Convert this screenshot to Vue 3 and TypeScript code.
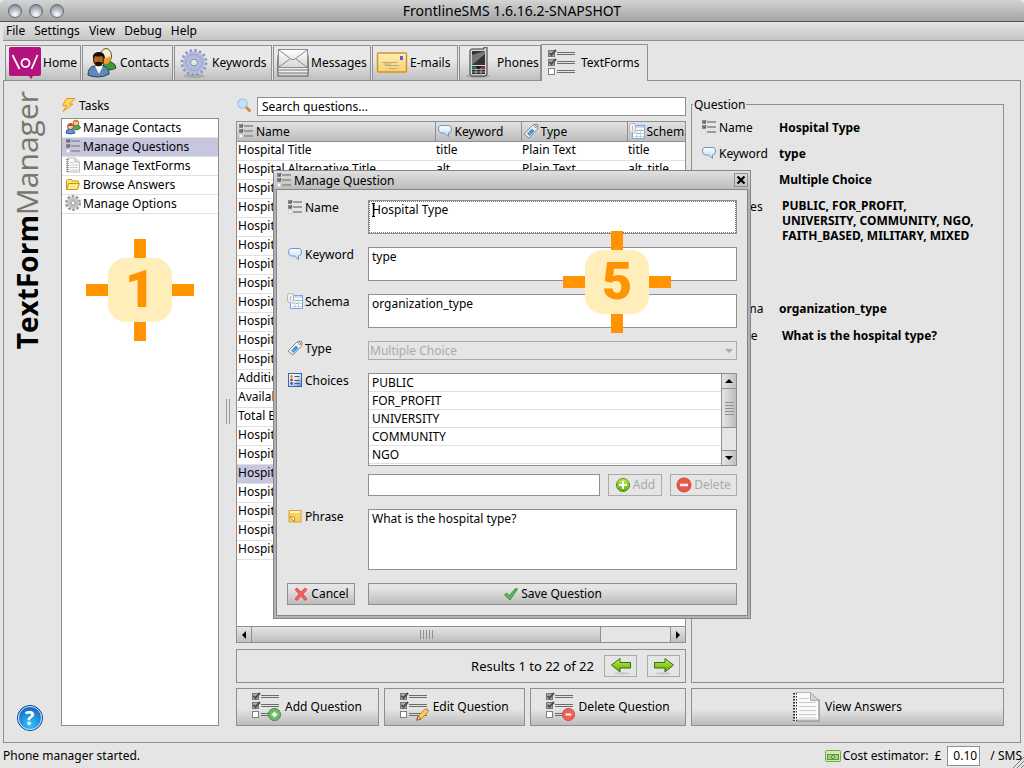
<script setup lang="ts">
import { ref } from 'vue'

interface Tab {
  label: string
  icon: string
  width: string
}

const menus = ['File', 'Settings', 'View', 'Debug', 'Help']

const tabs: Tab[] = [
  { label: 'Home', icon: 'home', width: 'w-home' },
  { label: 'Contacts', icon: 'contacts', width: 'w-contacts' },
  { label: 'Keywords', icon: 'gear-blue', width: 'w-keywords' },
  { label: 'Messages', icon: 'messages', width: 'w-messages' },
  { label: 'E-mails', icon: 'email', width: 'w-emails' },
  { label: 'Phones', icon: 'phone', width: 'w-phones' },
  { label: 'TextForms', icon: 'checklist', width: 'w-forms' },
]
const activeTab = ref('TextForms')

const tasks = [
  { label: 'Manage Contacts', icon: 'people' },
  { label: 'Manage Questions', icon: 'list' },
  { label: 'Manage TextForms', icon: 'notepad' },
  { label: 'Browse Answers', icon: 'folder' },
  { label: 'Manage Options', icon: 'gear' },
]
const activeTask = ref('Manage Questions')

const columns = [
  { label: 'Name', icon: 'list' },
  { label: 'Keyword', icon: 'bubble' },
  { label: 'Type', icon: 'tag' },
  { label: 'Schema', icon: 'schema' },
]

const names = [
  'Hospital Title',
  'Hospital Alternative Title',
  ...Array<string>(10).fill('Hospital'),
  'Additional',
  'Available',
  'Total Beds',
  ...Array<string>(7).fill('Hospital'),
]
const rows = names.map((name, i) => ({
  name,
  keyword: ['title', 'alt'][i] ?? '',
  type: i < 2 ? 'Plain Text' : '',
  schema: ['title', 'alt_title'][i] ?? '',
}))
const selectedRow = ref(17)

const details = [
  { label: 'Name', icon: 'list', value: 'Hospital Type', kind: '' },
  { label: 'Keyword', icon: 'bubble', value: 'type', kind: '' },
  { label: 'Type', icon: 'tag', value: 'Multiple Choice', kind: '' },
  {
    label: 'Choices',
    icon: 'choices',
    value: 'PUBLIC, FOR_PROFIT,\nUNIVERSITY, COMMUNITY, NGO,\nFAITH_BASED, MILITARY, MIXED',
    kind: 'tall',
  },
  { label: 'Schema', icon: 'schema', value: 'organization_type', kind: '' },
  { label: 'Phrase', icon: 'note', value: 'What is the hospital type?', kind: 'text' },
]

const choices = ['PUBLIC', 'FOR_PROFIT', 'UNIVERSITY', 'COMMUNITY', 'NGO']

const search = ref('Search questions...')
const questionName = ref('Hospital Type')
const keyword = ref('type')
const schema = ref('organization_type')
const newChoice = ref('')
const phrase = ref('What is the hospital type?')
const cost = ref('0.10')
</script>

<template>
  <div class="window">
    <svg class="defs" aria-hidden="true">
      <defs>
        <linearGradient id="gBlue" x1="0" y1="0" x2="0" y2="1">
          <stop offset="0" stop-color="#ffffff" /><stop offset="1" stop-color="#b9d8f5" />
        </linearGradient>
        <linearGradient id="gGold" x1="0" y1="0" x2="0" y2="1">
          <stop offset="0" stop-color="#fff0b8" /><stop offset="1" stop-color="#f7cf6b" />
        </linearGradient>
        <linearGradient id="gGreen" x1="0" y1="0" x2="0" y2="1">
          <stop offset="0" stop-color="#c8ef4e" /><stop offset="1" stop-color="#5fa800" />
        </linearGradient>
        <linearGradient id="gPaper" x1="0" y1="0" x2="0" y2="1">
          <stop offset="0" stop-color="#ffffff" /><stop offset="1" stop-color="#d6d6d6" />
        </linearGradient>
        <linearGradient id="gChoice" x1="0" y1="0" x2="1" y2="1">
          <stop offset="0" stop-color="#ffffff" /><stop offset="0.5" stop-color="#dbe7fb" /><stop offset="1" stop-color="#5f88cf" />
        </linearGradient>
        <radialGradient id="gHelp" cx="0.5" cy="0.75" r="0.8">
          <stop offset="0" stop-color="#3cc4ff" /><stop offset="1" stop-color="#0a55b8" />
        </radialGradient>
        <symbol id="i-home" viewBox="0 0 32 32">
          <path d="M2 0h28q2 0 2 2v25q0 2-2 2h-6l-2 3-2-3H2q-2 0-2-2V2q0-2 2-2z" fill="#b5127f" />
          <path d="M3.500 8l7 14M28.500 8l-6 14" fill="none" stroke="#fff" stroke-width="1.800" />
          <circle cx="16.500" cy="16" r="4" fill="none" stroke="#fff" stroke-width="1.800" />
        </symbol>
        <symbol id="i-contacts" viewBox="0 0 32 32">
          <path d="M17 22l1-7q4-2 7 0 5 2 5 6-3 2-8 2z" fill="#3a9a35" stroke="#15521a" />
          <ellipse cx="20" cy="9" rx="5.500" ry="7.500" fill="#f6efcd" stroke="#5b5334" />
          <path d="M16.500 11q4 1 7-2l1 4q-2 5-6 4z" fill="#f59a2c" />
          <path d="M2 28q0-8 6-9h9q6 1 6 8-5 3-11 3T2 28z" fill="#5d88ba" stroke="#1d3f6b" />
          <path d="M9 19l4 8 4-8z" fill="#fff" />
          <ellipse cx="12.500" cy="12.500" rx="5" ry="6.500" fill="#b9651c" stroke="#321400" />
          <path d="M7 12q-1-7 6-7 6 0 6 7-2-2-3-3-4 1-7 0-1 1-2 3zM9 15.500q4-1.500 7 0l-1 3h-5z" fill="#170b04" />
        </symbol>
        <symbol id="i-gear-blue" viewBox="0 0 32 32">
          <ellipse cx="16" cy="29" rx="11" ry="2" fill="#aaa" />
          <circle cx="16" cy="15.500" r="11.500" fill="none" stroke="#8d97bf" stroke-width="4" stroke-dasharray="2.300 2.215" />
          <circle cx="16" cy="15.500" r="7.500" fill="none" stroke="#b3bbdd" stroke-width="7" />
          <circle cx="16" cy="15.500" r="8" fill="none" stroke="#98a2cb" stroke-width="1" />
          <circle cx="16" cy="15.500" r="3.500" fill="#e5e5e5" stroke="#7480aa" />
        </symbol>
        <symbol id="i-messages" viewBox="0 0 32 32">
          <rect x="1" y="14" width="30" height="15" fill="#ddd" stroke="#555" />
          <rect x="1" y="11" width="30" height="15" fill="#eee" stroke="#777" />
          <rect x="1" y="8" width="30" height="15" fill="#eee" stroke="#777" />
          <rect x="1.500" y="2.500" width="29" height="18" fill="url(#gPaper)" stroke="#8b8b8b" />
          <path d="M2 20l11-8M30 20l-11-8M2 3l12 9q2 1.500 4 0l12-9" fill="none" stroke="#888" />
        </symbol>
        <symbol id="i-email" viewBox="0 0 32 32">
          <rect x="1.500" y="6" width="29" height="19" rx="1" fill="url(#gGold)" stroke="#d39324" stroke-width="1.500" />
          <rect x="24" y="9" width="3" height="4" fill="#6857dd" />
          <path d="M6 15.500h15M9 18.500h14M13 21.500h8M8 17h7" stroke="#b9a987" stroke-width="1" />
        </symbol>
        <symbol id="i-phone" viewBox="0 0 32 32">
          <ellipse cx="15" cy="29" rx="12" ry="2" fill="#aaa" />
          <path d="M7 4q0-2 2-2h12V0h3v27q0 2-2 2H9q-2 0-2-2z" fill="#d6d6d6" stroke="#333" />
          <rect x="9" y="4" width="13" height="14" fill="#333" />
          <path d="M9 18V8l13-4v3z" fill="#777" />
          <path d="M9 19h13v8H9z" fill="#222" />
          <path d="M9 20.500h4" stroke="#19983a" stroke-width="2" /><path d="M18 20.500h4" stroke="#c22" stroke-width="2" />
          <path d="M9 22.500h13M9 25h13M13 21v7M18 21v7" stroke="#aaa" />
        </symbol>
        <symbol id="i-checklist" viewBox="0 0 32 32">
          <rect x="1.500" y="3.500" width="6" height="6" fill="#b0b0b0" stroke="#777" />
          <rect x="1.500" y="12.500" width="6" height="6" fill="#b0b0b0" stroke="#777" />
          <rect x="1.500" y="21.500" width="6" height="6" fill="#fff" stroke="#808080" />
          <path d="M2.500 6l2 2 4.500-5M2.500 15l2 2 4.500-5" fill="none" stroke="#505050" stroke-width="2" />
          <path d="M10 5.500h18M10 7.500h18M10 14.500h18M10 16.500h18M10 23.500h18M10 25.500h18" stroke="#6c6c6c" stroke-width="1" />
        </symbol>
        <symbol id="i-list" viewBox="0 0 16 16">
          <path d="M1 1h4v4H1zM1 6h4v4H1z" fill="#8c8c8c" />
          <path d="M2 2.500l1.500 1.500L5 1.500M2 7.500L3.500 9 5 6.500" fill="none" stroke="#4c4c4c" />
          <rect x="1.500" y="11.500" width="3" height="3" fill="#fff" stroke="#d4d4d4" />
          <path d="M6 3h9M6 8h9M6 13h9" stroke="#9b9b9b" stroke-width="2" />
        </symbol>
        <symbol id="i-bubble" viewBox="0 0 16 16">
          <path d="M4 2.500h8q2.500 0 2.500 3.500t-2.500 4H11.500v3.500L7.500 10H4Q1.500 9.500 1.500 6T4 2.500z" fill="url(#gBlue)" stroke="#6b97cb" />
        </symbol>
        <symbol id="i-tag" viewBox="0 0 16 16">
          <path d="M1 11L10 2l4-1 1 1-.5 4-8.500 9z" fill="#f3f3f3" stroke="#888" />
          <path d="M4 10.500l5-5 2.500 2.500-5 5z" fill="#3a97df" /><path d="M5.500 9l2.500 2.500" stroke="#8bc9f5" />
          <circle cx="12.500" cy="3.500" r="1" fill="#fff" stroke="#777" />
        </symbol>
        <symbol id="i-schema" viewBox="0 0 16 16">
          <rect x="3.500" y="2.500" width="12" height="13" fill="#fff" stroke="#7fa5e0" />
          <path d="M4 4h11" stroke="#c3dbf5" stroke-width="2" />
          <path d="M5 7.500h10M5 10.500h10M5 13.500h10M8 6v9M11.500 6v9" stroke="#b9d3e6" />
          <path d="M9 7.500h2M12 7.500h2M9 10.500h2" stroke="#8fc25a" />
          <rect x="0.500" y="0.500" width="6" height="9" rx="2" fill="#f0f0f0" stroke="#b5b5b5" />
          <path d="M3.500 3v5" stroke="#bbb" />
        </symbol>
        <symbol id="i-choices" viewBox="0 0 16 16">
          <rect x="1.500" y="1.500" width="13" height="13" fill="url(#gChoice)" stroke="#3b62a4" />
          <circle cx="4.500" cy="4.500" r="1.400" fill="#e5a000" /><circle cx="4.500" cy="8" r="1.400" fill="#d8331f" /><circle cx="4.500" cy="11.500" r="1.400" fill="#2a62d8" />
          <path d="M7.500 4.500h5M7.500 8.500h5M7.500 11.500h5" stroke="#555" />
        </symbol>
        <symbol id="i-note" viewBox="0 0 16 16">
          <path d="M2 2.500h12V14H2z" fill="#f7d35b" stroke="#d9a03a" />
          <path d="M3 4h10" stroke="#fff3bd" stroke-width="2" />
          <path d="M2.500 9h5v4.500z" fill="#fff8d5" stroke="#c88b2b" />
        </symbol>
        <symbol id="i-people" viewBox="0 0 16 16">
          <path d="M7 9q0-3 4-3t4.500 3q-2 2-5 2z" fill="#57a957" stroke="#2f7a35" />
          <circle cx="11" cy="4" r="2.800" fill="#f3c89c" stroke="#a86a1e" /><path d="M8 3q3-4 6 0z" fill="#d98e22" />
          <path d="M1 14q0-4 4-4t5 4q-5 2-9 0z" fill="#5f97e0" stroke="#2458a5" />
          <circle cx="5.500" cy="7.500" r="3" fill="#f3c89c" stroke="#9b4c28" /><path d="M2.500 7q3-5 6 0z" fill="#b34d25" />
        </symbol>
        <symbol id="i-notepad" viewBox="0 0 16 16">
          <path d="M2.500 1h8l4 4v10h-12z" fill="#fafafa" stroke="#bbb" />
          <path d="M10 1v4h4" fill="#ddd" stroke="#bbb" />
          <path d="M5 5.500h4M5 8h8M5 10.500h8M5 13h8" stroke="#ccc" />
          <path d="M2.500 2v13" stroke="#999" stroke-width="3" stroke-dasharray="1 1" />
        </symbol>
        <symbol id="i-folder" viewBox="0 0 16 16">
          <path d="M1.500 13.500v-9l1-1h4l1 1.500h6v3" fill="#fbe47a" stroke="#c19a1c" />
          <path d="M3.500 7.500h11l-2 6h-11z" fill="#fdea85" stroke="#c19a1c" />
        </symbol>
        <symbol id="i-gear" viewBox="0 0 16 16">
          <circle cx="8" cy="8" r="6.500" fill="none" stroke="#999" stroke-width="3" stroke-dasharray="2.500 1.580" />
          <circle cx="8" cy="8" r="4" fill="none" stroke="#c2c2c2" stroke-width="4" />
          <circle cx="8" cy="8" r="2" fill="#fff" stroke="#999" />
        </symbol>
        <symbol id="i-bolt" viewBox="0 0 16 16">
          <path d="M5.500 1.500L1.500 8.500h4L2 14.500 12 7H8.500l5.500-5.500z" fill="#ffd85a" stroke="#e39a1c" />
        </symbol>
        <symbol id="i-search" viewBox="0 0 16 16">
          <path d="M9.500 9.500l3 3" stroke="#d08a3e" stroke-width="3" stroke-linecap="round" />
          <circle cx="5.500" cy="5.500" r="4.500" fill="#c7e2fb" stroke="#a9c5ea" stroke-width="1.500" />
        </symbol>
        <symbol id="i-plus" viewBox="0 0 16 16">
          <circle cx="8" cy="8" r="6.500" fill="url(#gGreen)" stroke="#4c8c12" />
          <path d="M8 4v8M4 8h8" stroke="#fff" stroke-width="2" />
        </symbol>
        <symbol id="i-plus-soft" viewBox="0 0 16 16">
          <circle cx="8" cy="8" r="6.500" fill="#6db96a" stroke="#3c8a3c" />
          <path d="M8 5v6M5 8h6" stroke="#fff" stroke-width="2" />
        </symbol>
        <symbol id="i-minus" viewBox="0 0 16 16">
          <circle cx="8" cy="8" r="7" fill="#ee5546" stroke="#c9473c" />
          <path d="M4 8h8" stroke="#fff" stroke-width="2.500" />
        </symbol>
        <symbol id="i-minus-soft" viewBox="0 0 16 16">
          <circle cx="8" cy="8" r="6.500" fill="#ee6357" stroke="#cf4338" />
          <path d="M5 8h6" stroke="#fff" stroke-width="2" />
        </symbol>
        <symbol id="i-pencil" viewBox="0 0 16 16">
          <path d="M2 14l1-4 8-8q2 0 3 3l-8 8z" fill="#fbd155" stroke="#b57a21" />
          <path d="M2 14l1-4q2 0 3 3z" fill="#f3dcb8" stroke="#8a5a30" /><path d="M11 2q2 0 3 3l1-1q0-2-3-3z" fill="#ec8c78" />
        </symbol>
        <symbol id="i-cross" viewBox="0 0 16 16">
          <path d="M2 3.500L4 2l4 4 4-4 2 1.500L10 8l4 5-2 1.500L8 10l-4 4.500L2 13l4-5z" fill="#f2605f" stroke="#dc4448" stroke-width="0.800" />
        </symbol>
        <symbol id="i-check" viewBox="0 0 16 16">
          <path d="M1.500 9l2-2 3 2.500 6-7 2 .5-7.500 11z" fill="#5cb85a" stroke="#3f8f44" />
        </symbol>
        <symbol id="i-arrow" viewBox="0 0 22 20">
          <ellipse cx="12" cy="17.500" rx="8" ry="1.500" fill="#ccc" />
          <path d="M1.500 9L10 2.500v4h10.500v5.500H10v4z" fill="url(#gGreen)" stroke="#2e7209" stroke-linejoin="round" />
        </symbol>
        <symbol id="i-report" viewBox="0 0 32 32">
          <path d="M5 31h23V9" fill="none" stroke="#999" stroke-width="1.500" />
          <path d="M4.500 2.500h15l8 7.500v20h-23z" fill="#fafafa" stroke="#bbb" />
          <path d="M19.500 2.500v8h8z" fill="#d4d4d4" stroke="#aaa" />
          <path d="M8 8.500h10M8 12.500h17M8 16.500h17M8 20.500h17M8 24.500h17M8 28h17" stroke="#ccc" />
          <path d="M4 3v28" stroke="#333" stroke-width="4" stroke-dasharray="1.500 1.500" />
          <path d="M4.500 3v28" stroke="#eee" stroke-width="1" />
        </symbol>
        <symbol id="i-money" viewBox="0 0 16 12">
          <rect x="0.500" y="0.500" width="15" height="11" rx="1" fill="#cfeab0" stroke="#6ea850" />
          <rect x="2.500" y="4.500" width="11" height="5" fill="#a4d07c" stroke="#5c963f" />
          <circle cx="8" cy="7" r="1.500" fill="#e7f6d3" stroke="#4a8530" />
        </symbol>
      </defs>
    </svg>

    <header class="titlebar">
      <div class="lights">
        <button type="button" class="light" aria-label="Close"></button>
        <button type="button" class="light" aria-label="Minimize"></button>
        <button type="button" class="light" aria-label="Zoom"></button>
      </div>
      <h1>FrontlineSMS 1.6.16.2-SNAPSHOT</h1>
    </header>

    <nav class="menubar">
      <button v-for="m in menus" :key="m" type="button">{{ m }}</button>
    </nav>

    <div class="tabs" role="tablist">
      <button
        v-for="t in tabs"
        :key="t.label"
        type="button"
        role="tab"
        class="tab"
        :class="[t.width, { active: activeTab === t.label }]"
        :aria-selected="activeTab === t.label"
        @click="activeTab = t.label"
      >
        <svg class="icon32"><use :href="'#i-' + t.icon" /></svg>{{ t.label }}
      </button>
    </div>

    <main class="panel">
      <aside class="brand">
        <h2><b>TextForm</b><span>Manager</span></h2>
        <button type="button" class="help" aria-label="Help">
          <svg viewBox="0 0 28 28">
            <circle cx="14" cy="14" r="12.500" fill="url(#gHelp)" stroke="#0b4794" />
            <circle cx="14" cy="14" r="11.500" fill="none" stroke="#d5ecff" />
          </svg>
          <span>?</span>
        </button>
      </aside>

      <section class="tasks">
        <h3><svg class="icon16"><use href="#i-bolt" /></svg>Tasks</h3>
        <ul>
          <li v-for="t in tasks" :key="t.label">
            <button type="button" :class="{ active: activeTask === t.label }" @click="activeTask = t.label">
              <svg class="icon16"><use :href="'#i-' + t.icon" /></svg>{{ t.label }}
            </button>
          </li>
        </ul>
        <div class="marker one"><span>1</span></div>
      </section>

      <div class="splitter"><i></i></div>

      <section class="center">
        <div class="search">
          <label for="search" aria-label="Search"><svg class="icon16"><use href="#i-search" /></svg></label>
          <input id="search" v-model="search" type="text" />
        </div>

        <div class="grid">
          <div class="viewport">
            <table>
              <colgroup><col class="c1" /><col class="c2" /><col class="c3" /><col class="c4" /></colgroup>
              <thead>
                <tr>
                  <th v-for="c in columns" :key="c.label">
                    <span><svg class="icon16"><use :href="'#i-' + c.icon" /></svg>{{ c.label }}</span>
                  </th>
                </tr>
              </thead>
              <tbody>
                <tr v-for="(r, i) in rows" :key="i" :class="{ selected: i === selectedRow }" @click="selectedRow = i">
                  <td>{{ r.name }}</td>
                  <td>{{ r.keyword }}</td>
                  <td>{{ r.type }}</td>
                  <td>{{ r.schema }}</td>
                </tr>
              </tbody>
            </table>
          </div>
          <div class="hscroll">
            <button type="button" aria-label="Scroll left"><svg viewBox="0 0 6 8"><path d="M5 0v8L1 4z" /></svg></button>
            <div class="thumb"><i v-for="n in 5" :key="n"></i></div>
            <div class="rest"></div>
            <button type="button" aria-label="Scroll right"><svg viewBox="0 0 6 8"><path d="M1 0v8l4-4z" /></svg></button>
          </div>
        </div>

        <div class="results">
          <span>Results 1 to 22 of 22</span>
          <button type="button" aria-label="Previous page"><svg><use href="#i-arrow" /></svg></button>
          <button type="button" aria-label="Next page"><svg class="flip"><use href="#i-arrow" /></svg></button>
        </div>

        <div class="actions">
          <button type="button" class="big add">
            <span class="combo"><svg class="icon32"><use href="#i-checklist" /></svg><svg class="over"><use href="#i-plus-soft" /></svg></span>Add Question
          </button>
          <button type="button" class="big edit">
            <span class="combo"><svg class="icon32"><use href="#i-checklist" /></svg><svg class="over"><use href="#i-pencil" /></svg></span>Edit Question
          </button>
          <button type="button" class="big del">
            <span class="combo"><svg class="icon32"><use href="#i-checklist" /></svg><svg class="over"><use href="#i-minus-soft" /></svg></span>Delete Question
          </button>
        </div>
      </section>

      <section class="side">
        <fieldset>
          <legend>Question</legend>
          <dl>
            <div v-for="d in details" :key="d.label" :class="d.kind">
              <dt><svg class="icon16"><use :href="'#i-' + d.icon" /></svg>{{ d.label }}</dt>
              <dd>{{ d.value }}</dd>
            </div>
          </dl>
        </fieldset>
        <button type="button" class="big"><svg class="icon32"><use href="#i-report" /></svg>View Answers</button>
      </section>
    </main>

    <footer class="status">
      <span>Phone manager started.</span>
      <label for="cost"><svg class="money"><use href="#i-money" /></svg>Cost estimator:</label>
      <span class="pound">£</span>
      <input id="cost" v-model="cost" type="text" />
      <span class="unit">/ SMS</span>
      <svg class="grip" viewBox="0 0 12 12"><path d="M1 12L12 1M5 12l7-7M9 12l3-3" stroke="#777" /></svg>
    </footer>

    <div class="dialog" role="dialog" aria-labelledby="dlg-title">
      <div class="dialog-title">
        <svg class="icon16"><use href="#i-list" /></svg>
        <h2 id="dlg-title">Manage Question</h2>
        <button type="button" aria-label="Close dialog">
          <svg viewBox="0 0 8 8"><path d="M0.500 0.500l7 7M7.500 0.500l-7 7" stroke="#000" stroke-width="2.200" /></svg>
        </button>
      </div>
      <form @submit.prevent>
        <label for="f-name"><svg class="icon16"><use href="#i-list" /></svg>Name</label>
        <div class="focused">
          <textarea id="f-name" v-model="questionName"></textarea>
          <svg class="ibeam" viewBox="0 0 5 14"><path d="M1 0.500h1l.5.500.5-.5h1M1 13.500h1l.5-.5.5.5h1M2.500 1v12" fill="none" stroke="#000" stroke-width="1.300" /></svg>
        </div>

        <label for="f-key"><svg class="icon16"><use href="#i-bubble" /></svg>Keyword</label>
        <textarea id="f-key" v-model="keyword"></textarea>

        <label for="f-schema"><svg class="icon16"><use href="#i-schema" /></svg>Schema</label>
        <textarea id="f-schema" v-model="schema"></textarea>

        <label for="f-type"><svg class="icon16"><use href="#i-tag" /></svg>Type</label>
        <div class="select">
          <select id="f-type" disabled><option>Multiple Choice</option></select>
          <svg viewBox="0 0 8 4"><path d="M0 0h8L4 4z" fill="#aaa" /></svg>
        </div>

        <label for="f-choice"><svg class="icon16"><use href="#i-choices" /></svg>Choices</label>
        <div class="choices">
          <div class="listbox">
            <ul><li v-for="c in choices" :key="c">{{ c }}</li></ul>
            <div class="vscroll">
              <button type="button" aria-label="Scroll up"><svg viewBox="0 0 8 4"><path d="M0 4h8L4 0z" /></svg></button>
              <div class="thumb"><i v-for="n in 5" :key="n"></i></div>
              <div class="rest"></div>
              <button type="button" aria-label="Scroll down"><svg viewBox="0 0 8 4"><path d="M0 0h8L4 4z" /></svg></button>
            </div>
          </div>
          <div class="adder">
            <input id="f-choice" v-model="newChoice" type="text" />
            <button type="button" class="btn w-add" disabled><svg class="icon16"><use href="#i-plus" /></svg>Add</button>
            <button type="button" class="btn w-delete" disabled><svg class="icon16"><use href="#i-minus" /></svg>Delete</button>
          </div>
        </div>

        <label for="f-phrase"><svg class="icon16"><use href="#i-note" /></svg>Phrase</label>
        <textarea id="f-phrase" v-model="phrase" class="phrase"></textarea>

        <button type="button" class="btn cancel"><svg class="icon16"><use href="#i-cross" /></svg>Cancel</button>
        <button type="submit" class="btn"><svg class="icon16"><use href="#i-check" /></svg>Save Question</button>
      </form>
      <div class="marker five"><span>5</span></div>
    </div>
  </div>
</template>

<style>
body {
  margin: 0;
  background: #e5e5e5;
}
</style>

<style scoped>
* {
  box-sizing: border-box;
}
.window {
  position: relative;
  display: flex;
  flex-direction: column;
  min-height: 100vh;
  overflow: hidden;
  background: #e5e5e5;
  color: #000;
  font-family: "Noto Sans", "Open Sans", sans-serif;
  font-size: 12px;
  line-height: 15px;
}
.defs {
  position: absolute;
  width: 0;
  height: 0;
}
button,
input,
select,
textarea {
  margin: 0;
  padding: 0;
  font: inherit;
  color: inherit;
  border-radius: 0;
  outline: none;
}
button {
  display: flex;
  align-items: center;
  justify-content: center;
  border: 0;
  background: none;
  white-space: nowrap;
}
h1,
h2,
h3,
ul,
dl,
dd {
  margin: 0;
  padding: 0;
  font-size: inherit;
  font-weight: normal;
  list-style: none;
}
svg {
  display: block;
  flex: none;
}
.icon16 {
  width: 16px;
  height: 16px;
}
.icon32 {
  width: 32px;
  height: 32px;
}

.titlebar {
  position: relative;
  height: 22px;
  border-bottom: 1px solid #515151;
  border-radius: 5px 5px 0 0;
  background: linear-gradient(#d4d4d4, #a4a4a4);
}
.lights {
  position: absolute;
  top: 4px;
  left: 8px;
  display: flex;
  gap: 7px;
}
.light {
  width: 14px;
  height: 14px;
  border: 1px solid #646a73;
  border-radius: 50%;
  background: radial-gradient(circle at 50% 80%, #f2f5fa 10%, #b4bac4 50%, #868d98 85%);
}
h1 {
  font-size: 14px;
  line-height: 22px;
  text-align: center;
}
.menubar {
  display: flex;
  gap: 9px;
  height: 19px;
  margin-left: 3px;
  padding: 0 3px 2px;
  border-bottom: 1px solid #8f8f8f;
  background: linear-gradient(#e5e5e5, #c6c6c6);
}
.tabs {
  position: relative;
  z-index: 1;
  display: flex;
  align-items: flex-end;
  gap: 1px;
  height: 39px;
  padding-left: 5px;
}
.tab {
  justify-content: flex-start;
  gap: 2px;
  height: 35px;
  padding: 0 1px 1px 3px;
  border: 1px solid #8f8f8f;
  border-bottom: 0;
  background: linear-gradient(#e8e8e8 40%, #bfbfbf);
}
.tab.active {
  height: 37px;
  margin: 0 0 -1px -1px;
  background: #e5e5e5;
}
.w-home { min-width: 76px; }
.w-contacts { min-width: 91px; }
.w-keywords { min-width: 98px; }
.w-messages { min-width: 98px; }
.w-emails { min-width: 86px; }
.w-phones { min-width: 82px; }
.w-forms { min-width: 107px; padding-left: 5px; }

.panel {
  display: flex;
  flex: 1;
  margin: 0 3px;
  padding: 16px 16px 16px 0;
  border: 1px solid #8f8f8f;
}
.brand {
  display: flex;
  flex-direction: column;
  align-items: center;
  justify-content: space-between;
  width: 57px;
  padding-right: 6px;
}
.brand h2 {
  writing-mode: vertical-rl;
  transform: rotate(180deg);
  margin: -6px 6px 0 0;
  font-family: "Open Sans", "Noto Sans", sans-serif;
  line-height: 36px;
}
.brand b {
  font-size: 28px;
}
.brand h2 span {
  color: #77776c;
  font-size: 30px;
}
.help {
  position: relative;
  width: 28px;
  height: 28px;
  margin-bottom: -6px;
}
.help svg {
  width: 28px;
  height: 28px;
}
.help span {
  position: absolute;
  inset: 0;
  color: #fff;
  font-size: 20px;
  font-weight: bold;
  line-height: 27px;
  text-align: center;
}

.tasks {
  position: relative;
  display: flex;
  flex-direction: column;
  width: 158px;
}
.tasks h3 {
  display: flex;
  align-items: center;
  gap: 2px;
  height: 16px;
  margin-bottom: 5px;
}
.tasks ul {
  flex: 1;
  border: 1px solid #8f8f8f;
  background: #fff;
}
.tasks li button {
  justify-content: flex-start;
  gap: 2px;
  width: 100%;
  height: 19px;
  padding: 0 0 2px 3px;
  border-bottom: 1px solid #e0e0e0;
}
.tasks li .active {
  background: #c6c6de;
}

.marker {
  position: absolute;
  display: grid;
  place-items: center;
  width: 108px;
  height: 102px;
  background:
    linear-gradient(#ff9400, #ff9400) center / 12px 100% no-repeat,
    linear-gradient(#ff9400, #ff9400) center / 100% 12px no-repeat;
}
.marker span {
  width: 64px;
  height: 64px;
  border-radius: 18px;
  background: #ffeeba;
  color: #ff9400;
  font-family: Roboto, "Open Sans", sans-serif;
  font-size: 52px;
  font-weight: 900;
  line-height: 64px;
  text-align: center;
}
.one {
  top: 142px;
  left: 25px;
}
.five {
  top: 60px;
  left: 289px;
}

.splitter {
  display: flex;
  align-items: center;
  justify-content: center;
  width: 17px;
}
.splitter i {
  width: 4px;
  height: 25px;
  border: 1px solid #999;
  border-width: 0 1px;
}

.center {
  display: flex;
  flex: 450 1 0;
  flex-direction: column;
  min-width: 0;
}
.search {
  display: flex;
  gap: 4px;
  height: 19px;
  margin-bottom: 5px;
}
.search label {
  padding: 1px 0 0 1px;
}
.search input {
  flex: 1;
  min-width: 0;
  padding-left: 4px;
  border: 1px solid #8f8f8f;
  background: #fff;
}
.grid {
  display: flex;
  flex: 1;
  flex-direction: column;
  min-height: 0;
  border: 1px solid #8f8f8f;
  background: #fff;
}
.viewport {
  flex: 1;
  overflow: hidden;
}
table {
  width: 540px;
  table-layout: fixed;
  border-collapse: collapse;
}
.c1 { width: 198px; }
.c2 { width: 86px; }
.c3 { width: 106px; }
th,
td {
  height: 19px;
  padding: 0 0 2px 1px;
  text-align: left;
  font-weight: normal;
  white-space: nowrap;
}
th {
  padding-bottom: 0;
  border-right: 1px solid #8f8f8f;
  border-bottom: 1px solid #8f8f8f;
  background: linear-gradient(#e2e2e2, #bdbdbd);
}
th span {
  display: flex;
  align-items: center;
  gap: 2px;
}
td {
  border-bottom: 1px solid #e0e0e0;
}
.selected td {
  background: #c6c6de;
}
.hscroll {
  display: flex;
  height: 16px;
  border-top: 1px solid #8f8f8f;
  background: #e5e5e5;
}
.hscroll button {
  width: 15px;
  border-right: 1px solid #8f8f8f;
  background: linear-gradient(#e5e5e5, #c0c0c0);
}
.hscroll button:last-child {
  border-right: 0;
  border-left: 1px solid #8f8f8f;
}
.hscroll svg {
  width: 6px;
  height: 8px;
}
.thumb {
  display: flex;
  align-items: center;
  justify-content: center;
  gap: 2px;
}
.hscroll .thumb {
  flex: 349 1 0;
  border-right: 1px solid #8f8f8f;
  background: linear-gradient(#e5e5e5, #bdbdbd);
}
.hscroll .rest {
  flex: 69 1 0;
}
.hscroll i {
  width: 1px;
  height: 9px;
  background: #8f8f8f;
}

.results {
  display: flex;
  align-items: center;
  justify-content: flex-end;
  gap: 10px;
  height: 34px;
  margin: 6px 0 5px;
  padding-right: 5px;
  border: 1px solid #8f8f8f;
  font-size: 13px;
}
.results button {
  width: 33px;
  height: 22px;
  border: 1px solid #aaa;
}
.results svg {
  width: 22px;
  height: 20px;
}
.flip {
  transform: scaleX(-1);
}
.actions {
  display: flex;
  gap: 5px;
}
.big {
  gap: 2px;
  height: 38px;
  padding: 0 2px 2px 0;
  border: 1px solid #8f8f8f;
  background: linear-gradient(#e5e5e5 55%, #bcbcbc);
}
.add { flex: 143 1 0; }
.edit { flex: 141 1 0; }
.del { flex: 156 1 0; }
.combo {
  position: relative;
}
.over {
  position: absolute;
  right: 1px;
  bottom: 0;
  width: 15px;
  height: 15px;
}

.side {
  display: flex;
  flex: 313 1 0;
  flex-direction: column;
  min-width: 0;
  gap: 5px;
  margin-left: 5px;
}
fieldset {
  flex: 1;
  min-width: 0;
  margin: 0;
  padding: 2px 9px 0;
  border: 1px solid #8f8f8f;
}
legend {
  margin-left: -8px;
  padding: 0 1px;
}
dl > div {
  display: flex;
  align-items: center;
  height: 26px;
}
dl .tall {
  align-items: flex-start;
  height: 103px;
  padding-top: 6px;
}
dl .text {
  height: 28px;
}
dt {
  display: flex;
  align-items: center;
  flex: none;
  gap: 2px;
  width: 78px;
}
dd {
  font-weight: bold;
  white-space: pre-line;
}
.tall dd,
.text dd {
  padding-left: 3px;
}

.status {
  position: relative;
  display: flex;
  align-items: center;
  height: 25px;
  padding: 0 2px 0 3px;
}
.status label {
  display: flex;
  align-items: center;
  gap: 2px;
  margin-left: auto;
}
.money {
  width: 16px;
  height: 12px;
}
.pound {
  margin: 0 6px;
}
.status input {
  width: 33px;
  height: 20px;
  padding-left: 5px;
  border: 1px solid #8f8f8f;
  background: #fff;
}
.unit {
  margin-left: 10px;
}
.grip {
  position: absolute;
  right: 0;
  bottom: 0;
  width: 12px;
  height: 12px;
}

.dialog {
  position: absolute;
  z-index: 2;
  top: 170px;
  left: 50%;
  width: 478px;
  margin-left: -239px;
  border: 1px solid #868686;
  background: #b2b2b2;
  padding: 0 2px 2px;
}
.dialog-title {
  display: flex;
  align-items: center;
  gap: 2px;
  height: 18px;
  margin: 0 -2px;
  padding: 0 2px;
  background: linear-gradient(#e0e0e0, #bcbcbc);
}
.dialog-title h2 {
  flex: 1;
}
.dialog-title button {
  width: 14px;
  height: 14px;
  border: 1px solid #8f8f8f;
}
.dialog-title button svg {
  width: 8px;
  height: 8px;
}
form {
  display: grid;
  grid-template-columns: 68px 1fr;
  gap: 13px;
  padding: 10px;
  border: 1px solid #868686;
  background: #e5e5e5;
}
form > label {
  display: flex;
  align-items: center;
  align-self: start;
  gap: 2px;
  height: 14px;
}
textarea {
  display: block;
  width: 100%;
  height: 34px;
  padding: 1px 3px;
  border: 1px solid #8f8f8f;
  background: #fff;
  overflow: hidden;
  resize: none;
}
.phrase {
  height: 61px;
}
.focused {
  position: relative;
}
.focused textarea {
  outline: 1px dotted #777;
  outline-offset: -2px;
}
.ibeam {
  position: absolute;
  top: 3px;
  left: 3px;
  width: 5px;
  height: 14px;
}
.select {
  position: relative;
  display: flex;
}
.select svg {
  position: absolute;
  top: 8px;
  right: 4px;
  width: 8px;
  height: 4px;
}
select {
  width: 100%;
  height: 19px;
  padding: 0 1px;
  border: 1px solid #aaa;
  background: #e5e5e5;
  color: #aaa;
  appearance: none;
  opacity: 1;
}
.listbox {
  display: flex;
  height: 93px;
  border: 1px solid #8f8f8f;
  background: #fff;
}
.listbox ul {
  flex: 1;
}
.listbox li {
  height: 18px;
  padding: 1px 3px 0;
  border-bottom: 1px solid #e0e0e0;
}
.vscroll {
  display: flex;
  flex-direction: column;
  width: 15px;
  border-left: 1px solid #8f8f8f;
  background: #e5e5e5;
}
.vscroll button {
  height: 15px;
  border-bottom: 1px solid #8f8f8f;
  background: linear-gradient(90deg, #e5e5e5, #c0c0c0);
}
.vscroll button:last-child {
  border-top: 1px solid #8f8f8f;
  border-bottom: 0;
}
.vscroll svg {
  width: 8px;
  height: 4px;
}
.vscroll .thumb {
  flex: 39 1 0;
  flex-direction: column;
  border-bottom: 1px solid #8f8f8f;
  background: linear-gradient(90deg, #e5e5e5, #bdbdbd);
}
.vscroll .rest {
  flex: 22 1 0;
}
.vscroll i {
  width: 9px;
  height: 1px;
  background: #8f8f8f;
}
.adder {
  display: flex;
  gap: 8px;
  height: 22px;
  margin-top: 8px;
}
.adder input {
  flex: 1;
  min-width: 0;
  padding: 0 3px;
  border: 1px solid #8f8f8f;
  background: #fff;
}
.btn {
  gap: 2px;
  height: 22px;
  padding: 0 4px 1px;
  border: 1px solid #8f8f8f;
  background: linear-gradient(#e5e5e5 20%, #bcbcbc);
}
.btn:disabled {
  border-color: #aaa;
  background: #e5e5e5;
  color: #aaa;
}
.w-add { min-width: 54px; }
.w-delete { min-width: 67px; }
</style>
